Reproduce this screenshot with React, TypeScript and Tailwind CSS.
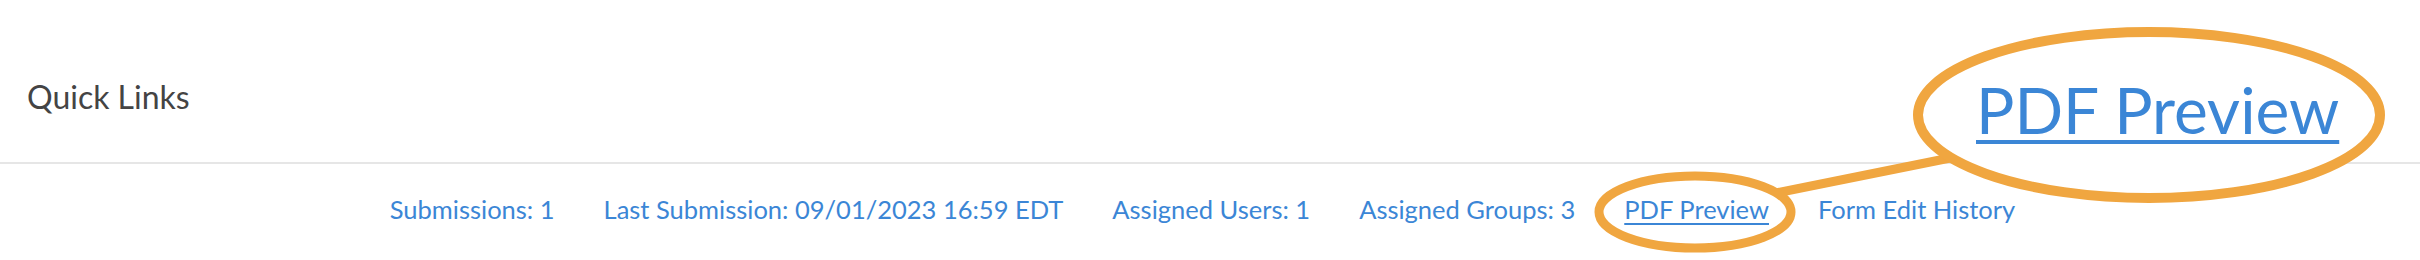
const links = [
  { label: 'Submissions: 1' },
  { label: 'Last Submission: 09/01/2023 16:59 EDT' },
  { label: 'Assigned Users: 1' },
  { label: 'Assigned Groups: 3' },
  { label: 'PDF Preview', underline: true },
  { label: 'Form Edit History' },
];

export default function App() {
  return (
    <div className="relative w-[2420px] h-[260px] bg-white overflow-hidden font-['Lato','Noto_Sans',sans-serif]">
      <div className="h-[164px] border-b-2 border-[#e6e6e6] pl-[27px] pt-[77px]">
        <h2 className="text-[32px] leading-[40px] text-[#444444]">Quick Links</h2>
      </div>

      <div className="flex justify-center gap-[49px] pt-[29px] pr-[15px] text-[25.5px] leading-[32px] text-[#3b86d6]">
        {links.map((l) => (
          <a key={l.label} href="#" className={l.underline ? 'underline underline-offset-4' : ''}>
            {l.label}
          </a>
        ))}
      </div>

      {/* annotation callout */}
      <svg className="absolute inset-0 pointer-events-none" width="2420" height="260" viewBox="0 0 2420 260">
        <line x1="1776" y1="193" x2="1950" y2="158" stroke="#f0a640" strokeWidth="9" />
        <ellipse cx="1695" cy="212" rx="96" ry="36" fill="none" stroke="#f0a640" strokeWidth="9" />
        <ellipse cx="2149" cy="115" rx="231" ry="83" fill="white" stroke="#f0a640" strokeWidth="10" />
      </svg>
      <a
        href="#"
        className="absolute left-[1976px] top-[70px] text-[64px] leading-[80px] text-[#3b86d6] underline decoration-[4px] underline-offset-[6px]"
      >
        PDF Preview
      </a>
    </div>
  );
}
